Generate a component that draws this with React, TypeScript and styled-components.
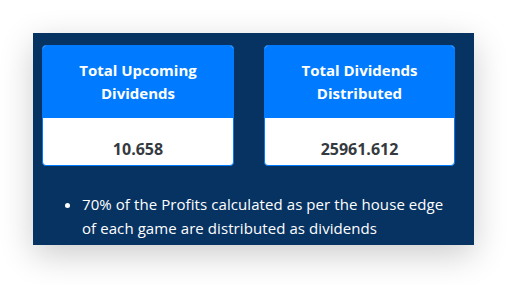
import React from "react";
import styled, { createGlobalStyle } from "styled-components";

const GlobalStyle = createGlobalStyle`
  body {
    margin: 0;
    background: #ffffff;
    font-family: "Open Sans", "Noto Sans", sans-serif;
  }
`;

const StPage = styled.div`
  padding: 33px 0 40px 33px;
`;

const StPanel = styled.div`
  width: 441px;
  box-sizing: border-box;
  padding: 12px 19px 5px 9px;
  background-color: #073362;
  box-shadow: 0 10px 32px rgba(0, 0, 0, 0.2);
`;

const StCardRow = styled.div`
  display: grid;
  grid-template-columns: 192px 191px;
  gap: 30px;
`;

const StCard = styled.div`
  display: flex;
  flex-direction: column;
  height: 119px;
  border: 1px solid #007bff;
  border-radius: 4px;
  overflow: hidden;
  background-color: #ffffff;
`;

const StCardHeader = styled.div`
  display: flex;
  align-items: center;
  justify-content: center;
  height: 72px;
  background-color: #007bff;
  color: #ffffff;
  font-size: 15px;
  font-weight: 700;
  line-height: 23px;
  text-align: center;
`;

const StCardValue = styled.div`
  flex: 1;
  padding-top: 19px;
  color: #343a40;
  font-size: 16px;
  font-weight: 700;
  line-height: 24px;
  text-align: center;
`;

const StNotes = styled.ul`
  margin: 26px 0 0;
  padding-left: 40px;
  color: #ffffff;
  font-size: 15px;
  letter-spacing: 0.08px;
  line-height: 24px;
`;

const cards = [
  { title: ["Total Upcoming", "Dividends"], value: "10.658" },
  { title: ["Total Dividends", "Distributed"], value: "25961.612" },
];

const App = () => {
  return (
    <>
      <GlobalStyle />
      <StPage>
        <StPanel>
          <StCardRow>
            {cards.map((card) => (
              <StCard key={card.value}>
                <StCardHeader>
                  {card.title[0]}
                  <br />
                  {card.title[1]}
                </StCardHeader>
                <StCardValue>{card.value}</StCardValue>
              </StCard>
            ))}
          </StCardRow>
          <StNotes>
            <li>
              70% of the Profits calculated as per the house edge of each game
              are distributed as dividends
            </li>
          </StNotes>
        </StPanel>
      </StPage>
    </>
  );
};

export default App;
